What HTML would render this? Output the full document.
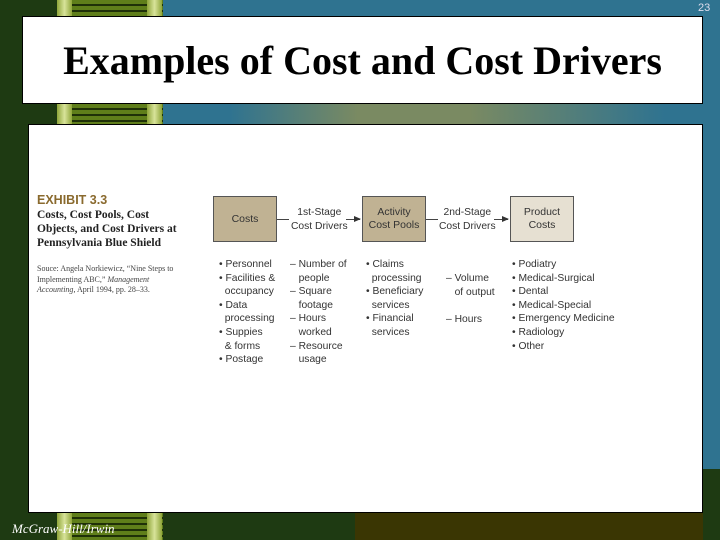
<!DOCTYPE html>
<html><head><meta charset="utf-8"><style>
*{margin:0;padding:0;box-sizing:border-box}
body{width:720px;height:540px;overflow:hidden;background:#1e3a12;position:relative;font-family:"Liberation Sans",sans-serif}
.a{position:absolute}
.blue{left:163px;top:0;width:557px;height:469px;background:#2f7390}
.grad{left:163px;top:103px;width:557px;height:22px;background:linear-gradient(90deg,#2f7390 0%,#2f7390 12%,#7a8a62 35%,#7a8a62 55%,#2f7390 90%)}
.olive{left:355px;top:513px;width:348px;height:27px;background:#3a3603}
.ladder{left:57px;width:106px;background:repeating-linear-gradient(180deg,#5f7e1a 0 4px,#1f3008 4px 6px)}
.rail{width:15px;background:linear-gradient(90deg,#8fa63a,#d8e39a,#8fa63a)}
.title{left:22px;top:16px;width:681px;height:88px;background:#fff;border:1px solid #000;text-align:center;font-family:"Liberation Serif",serif;font-weight:bold;font-size:40px;line-height:88px;letter-spacing:0px}
.content{left:28px;top:124px;width:675px;height:389px;background:#fff;border:1px solid #000}
.num{left:698px;top:2px;font-size:11px;color:#dde;font-family:"Liberation Sans Narrow","Liberation Sans",sans-serif}
.foot{left:12px;top:521px;color:#fff;font-style:italic;font-family:"Liberation Serif",serif;font-size:13px}
.box{border:1px solid #555;background:#c0b293;font-size:10.5px;color:#333;text-align:center;display:flex;align-items:center;justify-content:center;line-height:13px}
.t{font-size:10.3px;color:#333;line-height:13.6px;font-family:"Liberation Sans Narrow","Liberation Sans",sans-serif}
.ln{height:1px;background:#444}
</style></head><body>
<div class="a blue"></div>
<div class="a grad"></div>
<div class="a olive"></div>
<div class="a ladder" style="top:0;height:16px"></div>
<div class="a ladder" style="top:104px;height:20px"></div>
<div class="a ladder" style="top:513px;height:27px"></div>
<div class="a rail" style="left:57px;top:0;height:16px"></div><div class="a rail" style="left:147px;top:0;height:16px"></div>
<div class="a rail" style="left:57px;top:104px;height:20px"></div><div class="a rail" style="left:147px;top:104px;height:20px"></div>
<div class="a rail" style="left:57px;top:513px;height:27px"></div><div class="a rail" style="left:147px;top:513px;height:27px"></div>
<div class="a num">23</div>
<div class="a title">Examples of Cost and Cost Drivers</div>
<div class="a content"></div>
<div class="a" style="left:37px;top:193px;font-weight:bold;color:#8a6a2e;font-size:12.5px;font-family:'Liberation Sans Narrow','Liberation Sans',sans-serif">EXHIBIT 3.3</div>
<div class="a" style="left:37px;top:208px;font-family:'Liberation Serif',serif;font-weight:bold;font-size:11.5px;line-height:14px;color:#222">Costs, Cost Pools, Cost<br>Objects, and Cost Drivers at<br>Pennsylvania Blue Shield</div>
<div class="a" style="left:37px;top:264px;font-family:'Liberation Serif',serif;font-size:8px;line-height:10.5px;color:#444">Souce: Angela Norkiewicz, “Nine Steps to<br>Implementing ABC,” <i>Management</i><br><i>Accounting</i>, April 1994, pp. 28–33.</div>
<div class="a box" style="left:213px;top:196px;width:64px;height:46px">Costs</div>
<div class="a box" style="left:362px;top:196px;width:64px;height:46px">Activity<br>Cost Pools</div>
<div class="a box" style="left:510px;top:196px;width:64px;height:46px;background:#e6e0d2">Product<br>Costs</div>
<div class="a ln" style="left:277px;top:219px;width:12px"></div>
<div class="a ln" style="left:346px;top:219px;width:14px"></div>
<div class="a" style="left:354px;top:216px;width:0;height:0;border-left:7px solid #333;border-top:3px solid transparent;border-bottom:3px solid transparent"></div>
<div class="a ln" style="left:426px;top:219px;width:12px"></div>
<div class="a ln" style="left:494px;top:219px;width:14px"></div>
<div class="a" style="left:502px;top:216px;width:0;height:0;border-left:7px solid #333;border-top:3px solid transparent;border-bottom:3px solid transparent"></div>
<div class="a t" style="left:291px;top:206px;text-align:center">1st-Stage<br>Cost Drivers</div>
<div class="a t" style="left:439px;top:206px;text-align:center">2nd-Stage<br>Cost Drivers</div>
<div class="a t" style="left:219px;top:258px">• Personnel<br>• Facilities &amp;<br>&nbsp; occupancy<br>• Data<br>&nbsp; processing<br>• Suppies<br>&nbsp; &amp; forms<br>• Postage</div>
<div class="a t" style="left:290px;top:258px">– Number of<br>&nbsp;&nbsp; people<br>– Square<br>&nbsp;&nbsp; footage<br>– Hours<br>&nbsp;&nbsp; worked<br>– Resource<br>&nbsp;&nbsp; usage</div>
<div class="a t" style="left:366px;top:258px">• Claims<br>&nbsp; processing<br>• Beneficiary<br>&nbsp; services<br>• Financial<br>&nbsp; services</div>
<div class="a t" style="left:446px;top:272px">– Volume<br>&nbsp;&nbsp; of output<br><br>– Hours</div>
<div class="a t" style="left:512px;top:258px">• Podiatry<br>• Medical-Surgical<br>• Dental<br>• Medical-Special<br>• Emergency Medicine<br>• Radiology<br>• Other</div>
<div class="a foot">McGraw-Hill/Irwin</div>
</body></html>
